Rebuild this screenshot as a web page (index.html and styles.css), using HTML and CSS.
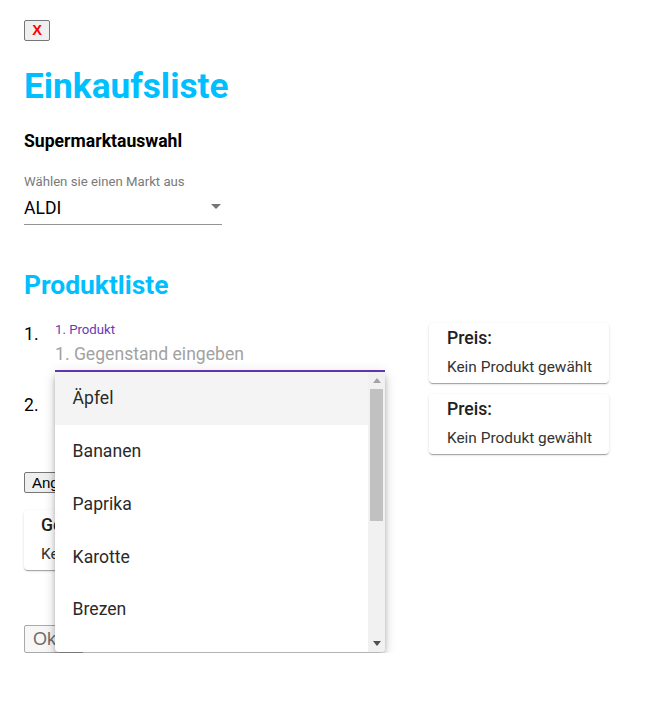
FILE: index.html
```html
<!DOCTYPE html>
<html lang="de">
<head>
<meta charset="utf-8">
<title>Einkaufsliste</title>
<link rel="stylesheet" href="styles.css">
</head>
<body>
<main class="app">
  <button class="close" type="button">X</button>
  <h1 class="title">Einkaufsliste</h1>
  <h3 class="section">Supermarktauswahl</h3>
  <div class="select">
    <label class="select-label">Wählen sie einen Markt aus</label>
    <div class="select-field">
      <span>ALDI</span>
      <svg class="select-arrow" width="10" height="5" viewBox="0 0 10 5"><path d="M0 0L5 5L10 0Z" fill="#757575"/></svg>
    </div>
  </div>
  <h2 class="subtitle">Produktliste</h2>
  <ol class="products">
    <li class="product-row">
      <span class="num">1.</span>
      <div class="field focused">
        <label class="field-label">1. Produkt</label>
        <div class="field-input placeholder">1. Gegenstand eingeben</div>
        <div class="menu">
          <ul class="menu-list">
            <li class="menu-item active">Äpfel</li>
            <li class="menu-item">Bananen</li>
            <li class="menu-item">Paprika</li>
            <li class="menu-item">Karotte</li>
            <li class="menu-item">Brezen</li>
          </ul>
          <div class="scrollbar">
            <div class="sb-btn"><svg width="8" height="5" viewBox="0 0 8 5"><path d="M0 5L4 0L8 5Z" fill="#a3a3a3"/></svg></div>
            <div class="sb-track"><div class="sb-thumb"></div></div>
            <div class="sb-btn"><svg width="8" height="5" viewBox="0 0 8 5"><path d="M0 0L4 5L8 0Z" fill="#505050"/></svg></div>
          </div>
        </div>
      </div>
      <div class="card">
        <div class="card-title">Preis:</div>
        <div class="card-text">Kein Produkt gewählt</div>
      </div>
    </li>
    <li class="product-row">
      <span class="num">2.</span>
      <div class="field">
        <label class="field-label">2. Produkt</label>
        <div class="field-input placeholder">2. Gegenstand eingeben</div>
      </div>
      <div class="card">
        <div class="card-title">Preis:</div>
        <div class="card-text">Kein Produkt gewählt</div>
      </div>
    </li>
  </ol>
  <button class="btn compare" type="button">Angebote vergleichen</button>
  <div class="card total">
    <div class="card-title">Gesamtpreis:</div>
    <div class="card-text">Kein Produkt gewählt</div>
  </div>
  <button class="btn ok" type="button">Okay</button>
</main>
</body>
</html>
```
FILE: styles.css
```css
html, body {
  margin: 0;
  padding: 0;
  background: #ffffff;
}

body {
  font-family: Roboto, "Noto Sans", Arial, sans-serif;
  color: rgba(0, 0, 0, 0.87);
}

.app {
  display: flex;
  flex-direction: column;
  align-items: flex-start;
  padding: 20px 24px 0;
}

.close {
  box-sizing: border-box;
  height: 21px;
  width: 26px;
  margin: 0;
  padding: 0;
  border: 1px solid #767676;
  border-radius: 2px;
  background: #efefef;
  color: #ff0000;
  font-family: "Liberation Sans", Arial, sans-serif;
  font-weight: bold;
  font-size: 14.6px;
  line-height: 19px;
}

.title {
  margin: 24px 0 0;
  font-size: 35.2px;
  line-height: 42px;
  font-weight: 700;
  color: #00bfff;
}

.section {
  margin: 24px 0 0;
  font-size: 17.6px;
  line-height: 21px;
  font-weight: 700;
  color: #000;
}

.select {
  margin-top: 22px;
  width: 198px;
  display: flex;
  flex-direction: column;
}

.select-label {
  font-size: 13.2px;
  line-height: 16px;
  color: #7a7a7a;
}

.select-field {
  margin-top: 8px;
  display: flex;
  justify-content: space-between;
  align-items: flex-start;
  font-size: 17.6px;
  line-height: 21px;
  color: #000;
  padding-bottom: 5px;
  border-bottom: 1px solid #949494;
}

.select-arrow {
  margin-top: 6px;
  margin-right: 1px;
}

.subtitle {
  margin: 44px 0 0;
  font-size: 26.4px;
  line-height: 32px;
  font-weight: 700;
  color: #00bfff;
}

.products {
  list-style: none;
  margin: 22px 0 0;
  padding: 0;
  display: flex;
  flex-direction: column;
  gap: 11px;
}

.product-row {
  display: flex;
  align-items: flex-start;
}

.num {
  width: 31px;
  padding-top: 1px;
  font-size: 17.6px;
  line-height: 21px;
  color: #000;
}

.field {
  position: relative;
  width: 330px;
  display: flex;
  flex-direction: column;
}

.field-label {
  font-size: 13.2px;
  line-height: 14px;
  color: #757575;
}

.focused .field-label {
  color: #673ab7;
}

.field-input {
  margin-top: 7px;
  font-size: 17.6px;
  line-height: 21px;
  padding-bottom: 5px;
  border-bottom: 1px solid #949494;
}

.focused .field-input {
  padding-bottom: 5px;
  border-bottom: 2px solid #673ab7;
}

.placeholder {
  color: #a2a2a2;
}

.card {
  box-sizing: border-box;
  width: 180px;
  height: 60px;
  margin-left: 44px;
  padding: 5px 18px 0;
  background: #fff;
  border-radius: 4px;
  box-shadow: 0 2px 1px -1px rgba(0,0,0,0.2), 0 1px 1px 0 rgba(0,0,0,0.14), 0 1px 3px 0 rgba(0,0,0,0.12);
}

.card-title {
  font-size: 17.6px;
  line-height: 21px;
  font-weight: 500;
  color: #212121;
}

.card-text {
  margin-top: 9px;
  font-size: 15.4px;
  line-height: 18px;
  color: #333;
  white-space: nowrap;
}

.btn {
  box-sizing: border-box;
  margin: 0;
  border: 1px solid #767676;
  border-radius: 2px;
  background: #efefef;
  font-family: "Liberation Sans", Arial, sans-serif;
  color: #000;
  white-space: nowrap;
}

.compare {
  margin-top: 18px;
  height: 21px;
  padding: 0 7px;
  font-size: 15px;
  line-height: 19px;
}

.total {
  margin: 17px 0 0;
  padding-left: 17px;
}

.ok {
  margin-top: 55px;
  height: 28px;
  padding: 0 8px;
  font-size: 18px;
  line-height: 26px;
  color: #6f6f6f;
  background: #f7f7f7;
  border-color: #a9a9a9;
}

/* autocomplete popup */
.menu {
  position: absolute;
  top: 100%;
  left: 0;
  width: 330px;
  height: 280px;
  display: flex;
  background: #fff;
  border-radius: 0 0 4px 4px;
  overflow: hidden;
  box-shadow: 0 3px 5px -1px rgba(0,0,0,0.2), 0 5px 8px 0 rgba(0,0,0,0.14), 0 1px 14px 0 rgba(0,0,0,0.12);
  z-index: 10;
}

.menu-list {
  flex: 1;
  list-style: none;
  margin: 0;
  padding: 0;
  overflow: hidden;
}

.menu-item {
  box-sizing: border-box;
  height: 52.8px;
  display: flex;
  align-items: center;
  padding: 0 17.6px;
  font-size: 17.6px;
  line-height: 26.4px;
  color: #2a2a2a;
}

.menu-item.active {
  background: #f4f4f4;
}

.scrollbar {
  width: 17px;
  display: flex;
  flex-direction: column;
  background: #f1f1f1;
}

.sb-btn {
  height: 17px;
  display: flex;
  align-items: center;
  justify-content: center;
}

.sb-track {
  flex: 1;
  padding: 0 2px;
}

.sb-thumb {
  height: 132px;
  background: #c1c1c1;
}
```
